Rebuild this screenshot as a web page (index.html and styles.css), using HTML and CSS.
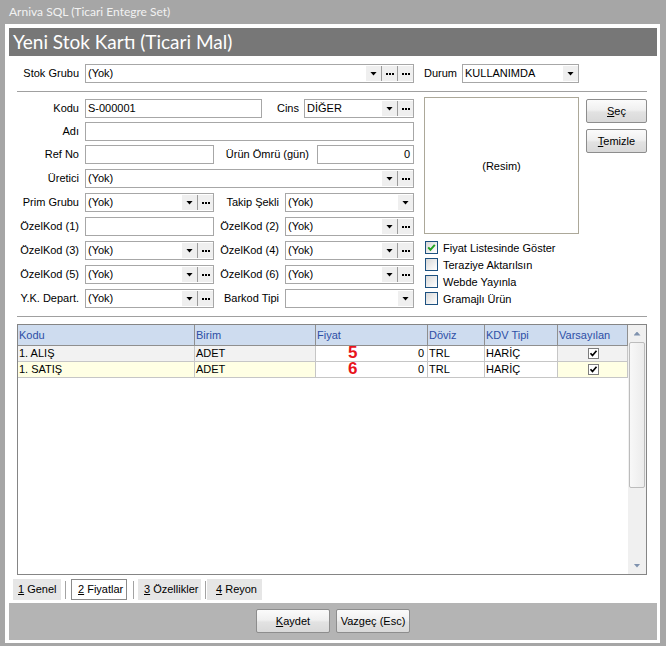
FILE: index.html
```html
<!DOCTYPE html>
<html lang="tr">
<head>
<meta charset="utf-8">
<title>Yeni Stok Kartı (Ticari Mal)</title>
<link rel="stylesheet" href="styles.css">
</head>
<body>
<div class="app-title">Arniva SQL (Ticari Entegre Set)</div>
<div class="window">
  <div class="header">Yeni Stok Kartı (Ticari Mal)</div>
  <div class="content">
    <div class="row top-row">
      <span class="lbl l-main">Stok Grubu</span>
      <div class="field w329"><span class="val">(Yok)</span><span class="btn arrow"></span><span class="btn dots"></span><span class="btn dots"></span></div>
      <span class="lbl l-durum">Durum</span>
      <div class="field w117"><span class="val">KULLANIMDA</span><span class="btn arrow"></span></div>
    </div>
    <div class="sep"></div>
    <div class="main">
      <div class="form">
        <div class="row">
          <span class="lbl l-main">Kodu</span>
          <div class="field w177"><span class="val">S-000001</span></div>
          <span class="lbl l-cins">Cins</span>
          <div class="field w110"><span class="val">DİĞER</span><span class="btn arrow"></span><span class="btn dots"></span></div>
        </div>
        <div class="row t">
          <span class="lbl l-main">Adı</span>
          <div class="field w329"><span class="val"></span></div>
        </div>
        <div class="row t">
          <span class="lbl l-main">Ref No</span>
          <div class="field w129"><span class="val"></span></div>
          <span class="lbl l-omur">Ürün Ömrü (gün)</span>
          <div class="field w97"><span class="val num">0</span></div>
        </div>
        <div class="row">
          <span class="lbl l-main">Üretici</span>
          <div class="field w329"><span class="val">(Yok)</span><span class="btn arrow"></span><span class="btn dots"></span></div>
        </div>
        <div class="row">
          <span class="lbl l-main">Prim Grubu</span>
          <div class="field w129"><span class="val">(Yok)</span><span class="btn arrow"></span><span class="btn dots"></span></div>
          <span class="lbl l-takip">Takip Şekli</span>
          <div class="field w129"><span class="val">(Yok)</span><span class="btn arrow"></span></div>
        </div>
        <div class="row">
          <span class="lbl l-main">ÖzelKod (1)</span>
          <div class="field w129"><span class="val"></span></div>
          <span class="lbl l-takip">ÖzelKod (2)</span>
          <div class="field w129"><span class="val">(Yok)</span><span class="btn arrow"></span><span class="btn dots"></span></div>
        </div>
        <div class="row">
          <span class="lbl l-main">ÖzelKod (3)</span>
          <div class="field w129"><span class="val">(Yok)</span><span class="btn arrow"></span><span class="btn dots"></span></div>
          <span class="lbl l-takip">ÖzelKod (4)</span>
          <div class="field w129"><span class="val">(Yok)</span><span class="btn arrow"></span><span class="btn dots"></span></div>
        </div>
        <div class="row">
          <span class="lbl l-main">ÖzelKod (5)</span>
          <div class="field w129"><span class="val">(Yok)</span><span class="btn arrow"></span><span class="btn dots"></span></div>
          <span class="lbl l-takip">ÖzelKod (6)</span>
          <div class="field w129"><span class="val">(Yok)</span><span class="btn arrow"></span><span class="btn dots"></span></div>
        </div>
        <div class="row">
          <span class="lbl l-main">Y.K. Depart.</span>
          <div class="field w129"><span class="val">(Yok)</span><span class="btn arrow"></span><span class="btn dots"></span></div>
          <span class="lbl l-takip">Barkod Tipi</span>
          <div class="field w129"><span class="val"></span><span class="btn arrow"></span></div>
        </div>
      </div>
      <div class="side">
        <div class="pic-area">
          <div class="pic">(Resim)</div>
          <div class="pic-btns">
            <button class="wbtn sbtn"><u>S</u>eç</button>
            <button class="wbtn sbtn"><u>T</u>emizle</button>
          </div>
        </div>
        <div class="checks">
          <div class="check"><span class="cb"><svg width="11" height="11" viewBox="0 0 11 11"><path d="M2.2 5.4 L4.4 7.8 L8.8 2.8" fill="none" stroke="#23a223" stroke-width="2"/></svg></span>Fiyat Listesinde Göster</div>
          <div class="check"><span class="cb"></span>Teraziye Aktarılsın</div>
          <div class="check"><span class="cb"></span>Webde Yayınla</div>
          <div class="check"><span class="cb"></span>Gramajlı Ürün</div>
        </div>
      </div>
    </div>
    <div class="sep"></div>
    <div class="grid">
      <div class="grid-main">
        <div class="table">
          <div class="th">Kodu</div>
          <div class="th">Birim</div>
          <div class="th">Fiyat</div>
          <div class="th">Döviz</div>
          <div class="th">KDV Tipi</div>
          <div class="th">Varsayılan</div>

          <div class="td ro1">1. ALIŞ</div>
          <div class="td ro1">ADET</div>
          <div class="td num"><span class="mark">5<br>6</span>0</div>
          <div class="td">TRL</div>
          <div class="td">HARİÇ</div>
          <div class="td ro1 ctr"><span class="gcb"><svg width="9" height="9" viewBox="0 0 9 9"><path d="M1.5 4.2 L3.5 6.5 L7.5 1.8" fill="none" stroke="#000" stroke-width="1.7"/></svg></span></div>

          <div class="td ro2">1. SATIŞ</div>
          <div class="td ro2">ADET</div>
          <div class="td num">0</div>
          <div class="td">TRL</div>
          <div class="td">HARİÇ</div>
          <div class="td ro2 ctr"><span class="gcb"><svg width="9" height="9" viewBox="0 0 9 9"><path d="M1.5 4.2 L3.5 6.5 L7.5 1.8" fill="none" stroke="#000" stroke-width="1.7"/></svg></span></div>
        </div>
      </div>
      <div class="scroll">
        <div class="sb-btn"><span class="sb-arrow up"></span></div>
        <div class="sb-thumb"></div>
        <div class="sb-track"></div>
        <div class="sb-btn"><span class="sb-arrow down"></span></div>
      </div>
    </div>
    <div class="tabs">
      <div class="tab t1"><u>1</u> Genel</div>
      <span class="tsep s1"></span>
      <div class="tab t2 sel"><u>2</u> Fiyatlar</div>
      <span class="tsep s2"></span>
      <div class="tab t3"><u>3</u> Özellikler</div>
      <span class="tsep s3"></span>
      <div class="tab t4"><u>4</u> Reyon</div>
    </div>
  </div>
  <div class="actions">
    <button class="wbtn abtn"><u>K</u>aydet</button>
    <button class="wbtn abtn">Vazgeç (Esc)</button>
  </div>
</div>
</body>
</html>
```

FILE: styles.css
```css
* { box-sizing: border-box; }
html, body { margin: 0; padding: 0; }
body {
  width: 666px;
  height: 646px;
  overflow: hidden;
  background: #a6a6a6;
  font-family: "Liberation Sans", Arial, sans-serif;
  font-size: 11px;
  color: #000;
}
.app-title {
  height: 24px;
  padding-left: 9px;
  font-family: Lato, "Open Sans", sans-serif;
  font-size: 12px;
  line-height: 23px;
  color: #f2f2f2;
}
.window {
  margin-left: 5px;
  width: 655px;
  height: 619px;
  background: #fff;
  padding: 4px 3px 3px 4px;
}
.header {
  height: 28px;
  background: #777777;
  color: #fff;
  font-family: Lato, "Open Sans", sans-serif;
  font-size: 19px;
  line-height: 28px;
  padding-left: 4px;
}
.content { padding: 0 10px 0 8px; }
.row { display: flex; align-items: center; height: 19px; }
.top-row { margin-top: 8px; }
.sep { height: 1px; background: #a0a0a0; }
.top-row + .sep { margin-top: 8px; }

.lbl { flex: none; text-align: right; white-space: nowrap; line-height: 19px; }
.l-main { width: 62px; margin-right: 6px; }
.l-durum { width: 38px; margin-left: 10px; text-align: left; }
.l-cins { width: 37px; margin-right: 5px; }
.l-omur { width: 95px; margin-right: 8px; }
.l-takip { width: 65px; margin-right: 6px; }

.field {
  flex: none;
  height: 19px;
  border: 1px solid #a7a7a7;
  background: #fff;
  display: flex;
  align-items: stretch;
}
.w329 { width: 329px; }
.w177 { width: 177px; }
.w110 { width: 110px; }
.w129 { width: 129px; }
.w97 { width: 97px; }
.w117 { width: 117px; }
.val {
  flex: 1;
  min-width: 0;
  padding-left: 2px;
  line-height: 17px;
  overflow: hidden;
  white-space: nowrap;
}
.val.num { text-align: right; padding-right: 3px; }
.btn {
  flex: none;
  width: 15px;
  margin: 1px 0;
  background: #efefef;
  display: flex;
  align-items: center;
  justify-content: center;
}
.btn.dots { width: 16px; border-left: 1px solid #9c9c9c; }
.arrow::after {
  content: "";
  width: 7px;
  height: 4px;
  background: #000;
  clip-path: polygon(0 0, 100% 0, 50% 100%);
}
.dots::after {
  content: "";
  width: 2px;
  height: 2px;
  background: #000;
  margin-right: 6px;
  box-shadow: 3px 0 0 #000, 6px 0 0 #000;
}

.main { display: flex; height: 224px; }
.form { width: 397px; padding-top: 7px; display: flex; flex-direction: column; }
.form .row + .row { margin-top: 5px; }
.form .row.t { margin-top: 4px; }

.side { margin-left: 10px; width: 223px; }
.pic-area { display: flex; margin-top: 5px; }
.pic {
  width: 155px;
  height: 137px;
  border: 1px solid #aca899;
  display: flex;
  align-items: center;
  justify-content: center;
}
.pic-btns {
  margin-left: 7px;
  padding-top: 2px;
  display: flex;
  flex-direction: column;
  gap: 6px;
}
.wbtn {
  border: 1px solid #8d8d8d;
  border-radius: 2px;
  background: linear-gradient(#fbfbfb 0%, #f0f0f0 45%, #e2e2e2 55%, #d9d9d9 100%);
  font-family: "Liberation Sans", Arial, sans-serif;
  font-size: 11px;
  color: #000;
  padding: 0;
  text-align: center;
  line-height: 22px;
}
.sbtn { width: 61px; height: 24px; }
.abtn { width: 74px; height: 24px; }

.checks {
  margin-top: 7px;
  padding-left: 1px;
  display: flex;
  flex-direction: column;
  gap: 4px;
}
.check { display: flex; align-items: center; height: 13px; white-space: nowrap; }
.cb {
  flex: none;
  width: 13px;
  height: 13px;
  margin-right: 5px;
  border: 1px solid #1d5180;
  background: linear-gradient(135deg, #d8d8d8 0%, #f4f4f4 70%, #ffffff 100%);
  display: flex;
  align-items: center;
  justify-content: center;
}

.grid {
  margin-top: 7px;
  height: 251px;
  border: 1px solid #858585;
  display: flex;
}
.grid-main { width: 610px; background: #fff; }
.table {
  display: grid;
  grid-template-columns: 177px 121px 112px 57px 73px 70px;
  grid-template-rows: 21px 16px 16px;
}
.th {
  background: #cedcef;
  color: #2d4fa6;
  border-right: 1px solid #8f8f8f;
  border-bottom: 1px solid #8f8f8f;
  padding-left: 1px;
  line-height: 20px;
  white-space: nowrap;
}
.td {
  position: relative;
  border-right: 1px solid #c6c6c6;
  border-bottom: 1px solid #c6c6c6;
  padding-left: 1px;
  line-height: 15px;
  white-space: nowrap;
}
.td.num { text-align: right; padding-right: 3px; }
.td.ctr { display: flex; align-items: center; justify-content: center; padding-left: 0; }
.ro1 { background: #f2f2f2; }
.ro2 { background: #ffffe4; }
.mark {
  position: absolute;
  z-index: 1;
  left: 32px;
  top: -1px;
  text-align: left;
  font-family: "Liberation Sans", Arial, sans-serif;
  font-weight: bold;
  font-size: 17px;
  line-height: 16px;
  color: #e8141b;
}
.gcb {
  width: 11px;
  height: 11px;
  border: 1px solid #7d7d7d;
  background: #fff;
  display: flex;
  align-items: center;
  justify-content: center;
  margin-left: 1px;
}

.scroll {
  width: 18px;
  background: #f0f0f0;
  display: flex;
  flex-direction: column;
}
.sb-btn {
  height: 17px;
  flex: none;
  display: flex;
  align-items: center;
  justify-content: center;
}
.sb-arrow {
  width: 7px;
  height: 4px;
  background: #7f92ae;
}
.sb-arrow.up { clip-path: polygon(50% 0, 100% 100%, 0 100%); }
.sb-arrow.down { clip-path: polygon(0 0, 100% 0, 50% 100%); }
.sb-thumb {
  flex: none;
  height: 146px;
  margin: 0 1px;
  border: 1px solid #bcbcbc;
  border-radius: 2px;
  background: linear-gradient(to right, #f8f8f8, #ececec);
}
.sb-track { flex: 1; }

.tabs {
  margin-top: 4px;
  margin-left: -4px;
  height: 21px;
  display: flex;
  align-items: center;
}
.tab {
  flex: none;
  height: 21px;
  line-height: 21px;
  background: #e6e6e6;
  white-space: nowrap;
}
.t1 { width: 48px; padding-left: 5px; }
.t2 { width: 56px; padding-left: 6px; }
.t3 { width: 63px; padding-left: 6px; }
.t4 { width: 55px; padding-left: 9px; }
.tab.sel {
  background: #fff;
  border: 1px solid #8a8a8a;
  line-height: 19px;
}
.tsep {
  flex: none;
  width: 1px;
  height: 18px;
  background: #a3a3a3;
}
.s1 { margin: 0 5px 0 4px; }
.s2 { margin: 0 4px 0 6px; }
.s3 { margin: 0 1px 0 4px; }

.actions {
  margin-top: 3px;
  height: 37px;
  background: #b4b4b4;
  display: flex;
  justify-content: center;
  gap: 6px;
  padding-top: 6px;
}
```
